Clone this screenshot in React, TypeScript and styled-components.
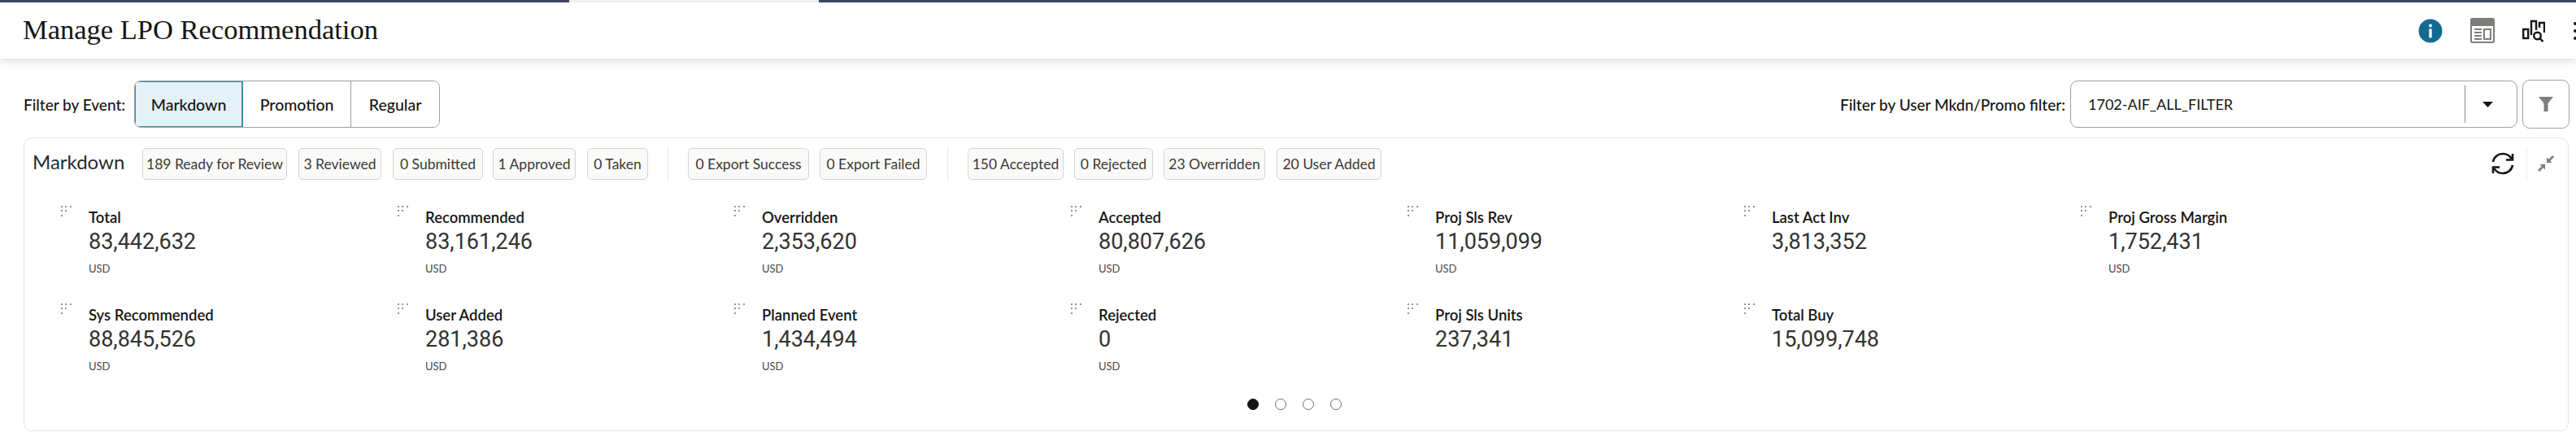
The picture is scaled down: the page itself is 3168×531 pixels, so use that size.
import React from "react";
import styled, { createGlobalStyle } from "styled-components";

const Global = createGlobalStyle`
  html, body { margin: 0; padding: 0; background: #fff; }
  body { width: 3168px; height: 531px; overflow: hidden; font-family: Lato, "Noto Sans", "Liberation Sans", sans-serif; color: #161513; }
  * { box-sizing: border-box; }
`;

const Page = styled.div`
  width: 3168px;
  height: 531px;
  overflow: hidden;
  display: flex;
  flex-direction: column;
`;
const TopStripe = styled.div`
  display: flex;
  height: 3px;
  flex: none;
  gap: 307px;
`;
const StripePart = styled.div<{ $w?: number }>`
  background: #3f4a6d;
  ${(p) => (p.$w ? `width:${p.$w}px;` : "flex:1;")}
`;
const Header = styled.header`
  height: 69px;
  flex: none;
  background: #fff;
  display: flex;
  align-items: center;
  justify-content: space-between;
  padding: 0 0 4px 28px;
  box-shadow: 0 1px 12px rgba(0, 0, 0, 0.18);
  position: relative;
`;
const Title = styled.h1`
  margin: 0;
  font-family: "Liberation Serif", serif;
  font-weight: 400;
  font-size: 34.5px;
  line-height: 40px;
  color: #161513;
`;
const HeaderIcons = styled.div`
  display: flex;
  align-items: center;
  margin-right: -2px;
  gap: 34px;
  padding-top: 4px;
`;
const FilterRow = styled.div`
  display: flex;
  align-items: center;
  justify-content: space-between;
  padding: 27px 8px 12px 29px;
  height: 97px;
  flex: none;
`;
const FilterGroup = styled.div`
  display: flex;
  align-items: center;
`;
const FilterLabel = styled.span<{ $gap: number }>`
  font-size: 19px;
  font-weight: 500;
  margin-right: ${(p) => p.$gap}px;
`;
const Segments = styled.div`
  display: flex;
  height: 58px;
  border: 1px solid #a3a09c;
  border-radius: 8px;
  overflow: hidden;
`;
const Segment = styled.div<{ $w: number; $on?: boolean }>`
  width: ${(p) => p.$w}px;
  display: flex;
  align-items: center;
  justify-content: center;
  font-size: 19.5px;
  font-weight: 500;
  background: ${(p) => (p.$on ? "#e4f1f7" : "#fff")};
  border-right: 1px solid ${(p) => (p.$on ? "#3b8cab" : "#a3a09c")};
  ${(p) => (p.$on ? "box-shadow: inset 0 0 0 1px #3b8cab;" : "")}
  &:last-child { border-right: 0; }
`;
const Select = styled.div`
  width: 550px;
  height: 58px;
  border: 1.5px solid #a3a09c;
  border-radius: 9px;
  display: flex;
  align-items: center;
  padding: 0 0 0 21px;
  font-size: 18px;
`;
const SelectValue = styled.span`
  flex: 1;
`;
const SelectArrow = styled.div`
  width: 64px;
  height: 46px;
  padding-right: 9px;
  border-left: 1px solid #8d8a86;
  display: flex;
  align-items: center;
  justify-content: center;
`;
const FilterButton = styled.button`
  width: 58px;
  height: 60px;
  margin-left: 6px;
  background: #fff;
  border: 1.5px solid #a3a09c;
  border-radius: 9px;
  padding: 0;
  display: flex;
  align-items: center;
  justify-content: center;
`;
const Panel = styled.section`
  flex: none;
  width: 3130px;
  height: 361px;
  margin-left: 29px;
  border: 1.5px solid #e6e5e3;
  border-radius: 10px;
  padding: 11px 0 0 10px;
`;
const PanelHead = styled.div`
  display: flex;
  align-items: center;
  height: 40px;
`;
const PanelTitle = styled.div`
  font-size: 24px;
  color: #2b2a28;
  width: 135px;
  flex: none;
  padding-bottom: 6px;
`;
const Chip = styled.div<{ $w: number; $gap: number }>`
  width: ${(p) => p.$w}px;
  margin-right: ${(p) => p.$gap}px;
  height: 39px;
  flex: none;
  background: #fafaf9;
  border: 1px solid #d6d5d2;
  border-radius: 5px;
  display: flex;
  align-items: center;
  justify-content: center;
  font-size: 17.5px;
  color: #3a3937;
  white-space: nowrap;
`;
const Sep = styled.div`
  width: 1px;
  height: 39px;
  flex: none;
  background: #e6e5e3;
  margin-right: 24px;
`;
const PanelTools = styled.div`
  margin-left: auto;
  display: flex;
  align-items: center;
  padding-right: 17px;
`;
const ToolSep = styled.div`
  width: 1px;
  height: 40px;
  background: #eeedeb;
  margin: 0 13px 0 14px;
`;
const Grid = styled.div`
  display: grid;
  grid-template-columns: repeat(7, 414px);
  grid-auto-rows: 120px;
  margin: 31px 0 0 35px;
`;
const Tile = styled.div`
  display: flex;
  gap: 20px;
`;
const Handle = styled.svg`
  flex: none;
  width: 14px;
  height: 14px;
  margin-top: 1px;
  color: #5a5957;
`;
const TileBody = styled.div`
  display: flex;
  flex-direction: column;
`;
const TileLabel = styled.div`
  font-size: 18.5px;
  line-height: 24px;
  font-weight: 600;
  color: #161513;
  margin-top: 3px;
`;
const TileValue = styled.div`
  font-family: Roboto, sans-serif;
  font-size: 27px;
  line-height: 34px;
  font-weight: 400;
  color: #333230;
  margin-top: 1px;
`;
const TileUnit = styled.div`
  font-size: 13px;
  line-height: 18px;
  margin-top: 7px;
  color: #4a4947;
`;
const Pager = styled.div`
  display: flex;
  justify-content: center;
  gap: 20px;
  margin-top: -2px;
  margin-left: -15px;
`;
const Dot = styled.span<{ $on?: boolean }>`
  width: 14px;
  height: 14px;
  border-radius: 50%;
  background: ${(p) => (p.$on ? "#161513" : "#fff")};
  border: 1.5px solid ${(p) => (p.$on ? "#161513" : "#6f6e6b")};
`;

const chips: [string, number, number][] = [
  ["189 Ready for Review", 178, 14],
  ["3 Reviewed", 102, 14],
  ["0 Submitted", 111, 12],
  ["1 Approved", 102, 14],
  ["0 Taken", 75, 24],
];
const chips2: [string, number, number][] = [
  ["0 Export Success", 149, 13],
  ["0 Export Failed", 132, 25],
];
const chips3: [string, number, number][] = [
  ["150 Accepted", 118, 13],
  ["0 Rejected", 97, 13],
  ["23 Overridden", 125, 14],
  ["20 User Added", 129, 0],
];

const tiles: { label: string; value: string; unit?: boolean }[] = [
  { label: "Total", value: "83,442,632", unit: true },
  { label: "Recommended", value: "83,161,246", unit: true },
  { label: "Overridden", value: "2,353,620", unit: true },
  { label: "Accepted", value: "80,807,626", unit: true },
  { label: "Proj Sls Rev", value: "11,059,099", unit: true },
  { label: "Last Act Inv", value: "3,813,352" },
  { label: "Proj Gross Margin", value: "1,752,431", unit: true },
  { label: "Sys Recommended", value: "88,845,526", unit: true },
  { label: "User Added", value: "281,386", unit: true },
  { label: "Planned Event", value: "1,434,494", unit: true },
  { label: "Rejected", value: "0", unit: true },
  { label: "Proj Sls Units", value: "237,341" },
  { label: "Total Buy", value: "15,099,748" },
];

const HandleIcon = () => (
  <Handle viewBox="0 0 14 14" fill="currentColor">
    {[
      [1, 1], [6, 1], [12, 1],
      [1, 6], [6, 6],
      [1, 12],
    ].map(([x, y]) => (
      <rect key={`${x}-${y}`} x={x - 0.8} y={y - 0.8} width="1.6" height="1.6" />
    ))}
  </Handle>
);

const InfoIcon = () => (
  <svg width="30" height="30" viewBox="0 0 30 30">
    <circle cx="15" cy="15" r="14.5" fill="#136a92" />
    <circle cx="15" cy="8.5" r="2" fill="#fff" />
    <rect x="13.3" y="12.5" width="3.4" height="11" rx="0.8" fill="#fff" />
  </svg>
);
const PanelIcon = () => (
  <svg width="30" height="31" viewBox="0 0 30 31">
    <rect x="1" y="1" width="28" height="29" rx="1.5" fill="#fff" stroke="#7e7d7a" strokeWidth="2" />
    <rect x="1" y="1" width="28" height="9" fill="#7e7d7a" />
    <path d="M5 14h9M5 18h9M5 22h9M5 26h9" stroke="#7e7d7a" strokeWidth="2" />
    <rect x="17" y="14" width="8" height="12" fill="none" stroke="#7e7d7a" strokeWidth="2" />
  </svg>
);
const BarsSearchIcon = () => (
  <svg width="28" height="28" viewBox="0 0 28 28" fill="none" stroke="#161513" strokeWidth="2.4">
    <rect x="1.2" y="12" width="6" height="11" />
    <path d="M11 19V2h6v11" />
    <path d="M21 10V4h6v12" />
    <circle cx="18.5" cy="20" r="4.3" />
    <path d="M21.5 23.2l4 4" />
  </svg>
);
const Kebab = () => (
  <svg width="6" height="28" viewBox="0 0 6 28" fill="#161513">
    <circle cx="3" cy="5" r="2" />
    <circle cx="3" cy="14" r="2" />
    <circle cx="3" cy="23" r="2" />
  </svg>
);
const Caret = () => (
  <svg width="13" height="7" viewBox="0 0 13 7">
    <path d="M0 0h13L6.5 7z" fill="#161513" />
  </svg>
);
const FunnelIcon = () => (
  <svg width="20" height="20" viewBox="0 0 20 20">
    <path d="M1 1h18l-6.5 8v10h-5V9z" fill="#7e7d7a" />
  </svg>
);
const RefreshIcon = () => (
  <svg width="30" height="30" viewBox="0 0 30 30" fill="none" stroke="#161513" strokeWidth="2.6">
    <path d="M3 13C4 7 9 3 15 3c4.500 0 8.500 2.300 10.500 6" />
    <path d="M27 3v7.500h-8" />
    <path d="M27 17c-1 6-6 10-12 10-4.500 0-8.500-2.300-10.500-6" />
    <path d="M3 27v-7.500h8" />
  </svg>
);
const CollapseIcon = () => (
  <svg width="20" height="20" viewBox="0 0 20 20" fill="#7e7d7a">
    <path d="M11 9V2.500l2.300 2.300L18 0l2 2-4.800 4.700L17.500 9z" />
    <path d="M9 11v6.500l-2.300-2.300L2 20l-2-2 4.800-4.700L2.500 11z" />
  </svg>
);

export default function App() {
  return (
    <Page>
      <Global />
      <TopStripe>
        <StripePart $w={700} />
        <StripePart />
      </TopStripe>
      <Header>
        <Title>Manage LPO Recommendation</Title>
        <HeaderIcons>
          <InfoIcon />
          <PanelIcon />
          <BarsSearchIcon />
          <Kebab />
        </HeaderIcons>
      </Header>
      <FilterRow>
        <FilterGroup>
          <FilterLabel $gap={11}>Filter by Event:</FilterLabel>
          <Segments>
            <Segment $w={133} $on>Markdown</Segment>
            <Segment $w={133}>Promotion</Segment>
            <Segment $w={108}>Regular</Segment>
          </Segments>
        </FilterGroup>
        <FilterGroup>
          <FilterLabel $gap={6}>Filter by User Mkdn/Promo filter:</FilterLabel>
          <Select>
            <SelectValue>1702-AIF_ALL_FILTER</SelectValue>
            <SelectArrow><Caret /></SelectArrow>
          </Select>
          <FilterButton aria-label="Filter"><FunnelIcon /></FilterButton>
        </FilterGroup>
      </FilterRow>
      <Panel>
        <PanelHead>
          <PanelTitle>Markdown</PanelTitle>
          {chips.map(([t, w, g]) => <Chip key={t} $w={w} $gap={g}>{t}</Chip>)}
          <Sep />
          {chips2.map(([t, w, g]) => <Chip key={t} $w={w} $gap={g}>{t}</Chip>)}
          <Sep />
          {chips3.map(([t, w, g]) => <Chip key={t} $w={w} $gap={g}>{t}</Chip>)}
          <PanelTools>
            <RefreshIcon />
            <ToolSep />
            <CollapseIcon />
          </PanelTools>
        </PanelHead>
        <Grid>
          {tiles.map((t) => (
            <Tile key={t.label}>
              <HandleIcon />
              <TileBody>
                <TileLabel>{t.label}</TileLabel>
                <TileValue>{t.value}</TileValue>
                {t.unit && <TileUnit>USD</TileUnit>}
              </TileBody>
            </Tile>
          ))}
        </Grid>
        <Pager>
          <Dot $on />
          <Dot />
          <Dot />
          <Dot />
        </Pager>
      </Panel>
    </Page>
  );
}
